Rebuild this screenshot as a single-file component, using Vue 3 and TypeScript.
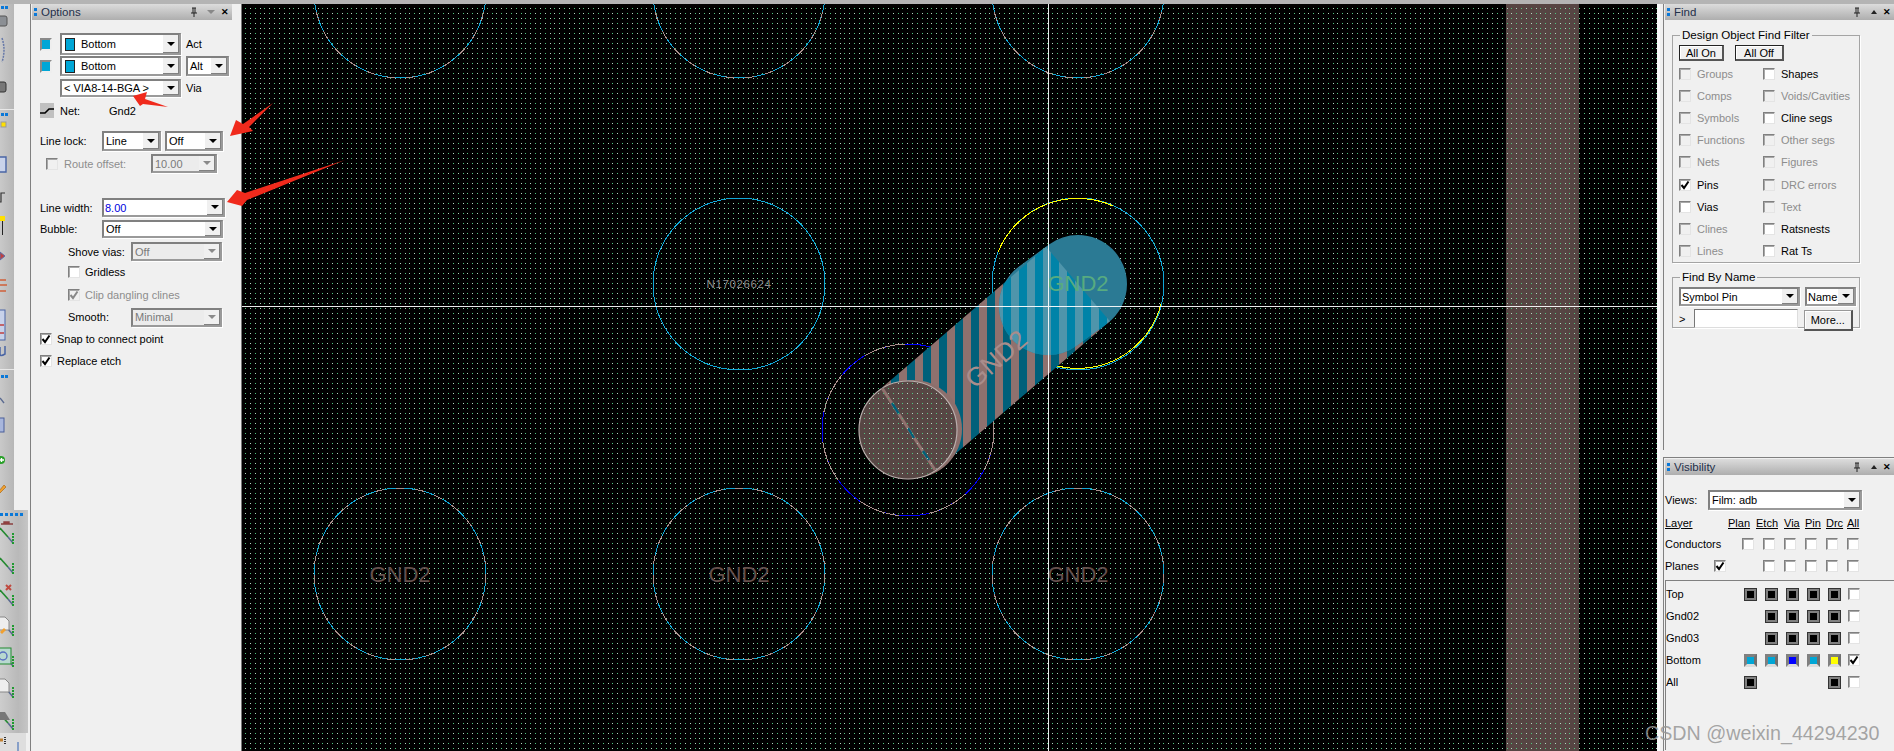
<script setup lang="ts">
type Cell = { label: string; on?: boolean; dis?: boolean }
const findRows: Cell[][] = [
  [{ label: 'Groups', dis: true }, { label: 'Shapes' }],
  [{ label: 'Comps', dis: true }, { label: 'Voids/Cavities', dis: true }],
  [{ label: 'Symbols', dis: true }, { label: 'Cline segs' }],
  [{ label: 'Functions', dis: true }, { label: 'Other segs', dis: true }],
  [{ label: 'Nets', dis: true }, { label: 'Figures', dis: true }],
  [{ label: 'Pins', on: true }, { label: 'DRC errors', dis: true }],
  [{ label: 'Vias' }, { label: 'Text', dis: true }],
  [{ label: 'Clines', dis: true }, { label: 'Ratsnests' }],
  [{ label: 'Lines', dis: true }, { label: 'Rat Ts' }],
]
const K = '#000'
const layers: { name: string; sw: (string | null)[]; on?: boolean }[] = [
  { name: 'Top', sw: [K, K, K, K, K] },
  { name: 'Gnd02', sw: [null, K, K, K, K] },
  { name: 'Gnd03', sw: [null, K, K, K, K] },
  { name: 'Bottom', sw: ['#00a6d6', '#00a6d6', '#0000ff', '#00a6d6', '#ffff00'], on: true },
  { name: 'All', sw: [K, null, null, null, K] },
]
const cols = [0, 5, 10, 15, 19, 24]
const rows = [0, 5, 10, 15, 20]
const dots = cols.flatMap((x, i) =>
  rows.map((y, j) => ({ x, y, c: (i + j) % 2 === 0 ? '#4fc77f' : '#b5d6c2' })),
)
const pads = [
  { x: 400, y: -8 }, { x: 739, y: -8 }, { x: 1078, y: -8 },
  { x: 400, y: 574 }, { x: 739, y: 574 }, { x: 1078, y: 574 },
]
const traceY = [528, 558, 590, 620, 651, 682, 714]
</script>

<template>
  <div class="root">
    <div class="topbar"></div>
    <div class="main">
      <div class="toolbar">
        <div class="tb-up">
          <svg class="tb-svg" width="14" height="506" viewBox="0 4 14 506">
            <rect x="1" y="6" width="3" height="3" fill="#0a78d8" /><rect x="5" y="6" width="3" height="3" fill="#0a78d8" />
            <rect x="-4" y="16" width="11" height="10" rx="2" fill="#8b8f94" stroke="#555" />
            <path d="M2 38 Q6 50 2 62" fill="none" stroke="#6678a8" stroke-width="1.5" stroke-dasharray="2 1" />
            <rect x="-4" y="82" width="10" height="10" rx="2" fill="#777" stroke="#333" />
            <rect y="109" width="14" height="1" fill="#e8e8e8" />
            <rect x="1" y="113" width="3" height="3" fill="#0a78d8" /><rect x="5" y="113" width="3" height="3" fill="#0a78d8" />
            <rect x="1" y="122" width="5" height="5" fill="#ffe000" stroke="#999" />
            <path d="M-1 157 H6 V172 H-1" fill="#c9d3ea" stroke="#4a65a5" stroke-width="1.4" />
            <path d="M-1 202 H1 V193 H5" fill="none" stroke="#333" stroke-width="1.2" />
            <rect x="0" y="216" width="5" height="5" fill="#ffe000" /><path d="M2.5 221 V235" stroke="#222" stroke-width="1" />
            <path d="M0 252 L5 256 L0 260 Z" fill="#c04040" stroke="#5a70a8" />
            <path d="M0 280 H6 M0 285 H7 M0 291 H6" stroke="#d0603a" stroke-width="1.5" />
            <rect x="-2" y="310" width="7" height="30" fill="#c8d2ea" stroke="#4a65a5" />
            <path d="M0 325 H4 M0 333 H4" stroke="#c04040" stroke-width="1.5" />
            <path d="M0 347 V354 Q0 357 5 354 V346" fill="none" stroke="#4a65a5" stroke-width="1.5" />
            <rect y="369" width="14" height="1" fill="#e8e8e8" />
            <rect x="1" y="375" width="3" height="3" fill="#0a78d8" /><rect x="5" y="375" width="3" height="3" fill="#0a78d8" />
            <path d="M0 398 L4 403" stroke="#5a6a90" stroke-width="1.4" />
            <rect x="-3" y="418" width="7" height="14" fill="#a8b6dc" stroke="#4a5e9a" />
            <circle cx="1" cy="460" r="4" fill="#2aa02a" /><path d="M-1 460 H4 M1.5 458 V462" stroke="#fff" stroke-width="1.4" />
            <path d="M-1 491 L4 485 L6 487 L0 493 Z" fill="#f0a030" stroke="#a06010" stroke-width=".6" />
          </svg>
        </div>
        <div class="tb-low">
          <svg class="tb-svg" width="28" height="223" viewBox="0 510 28 223">
            <rect v-for="i in 5" :key="i" :x="i * 5 - 5" y="513" width="3" height="3" fill="#0a78d8" />
            <g v-for="y in traceY" :key="y">
              <path :d="`M0 ${y} L8 ${y + 9}`" stroke="#238a30" stroke-width="1.6" />
              <path :d="`M8 ${y + 9} L13 ${y + 15}`" stroke="#5a6a90" stroke-width="1.6" />
              <path :d="`M13 ${y + 5} V${y + 17}`" stroke="#1f9a30" stroke-width="2" stroke-dasharray="2 1" />
            </g>
            <path d="M1 524 H13 M4 524 V522 H9 V524" fill="#a84040" stroke="#8a4040" stroke-width="1.4" />
            <path d="M6 585 L11 590 M11 585 L6 590" stroke="#c04a40" stroke-width="2" />
            <path d="M-1 617 H5 L9 621 V630 H-1 Z" fill="#eee" stroke="#888" />
            <path d="M0 632 L4 628 L6 630 L2 634 Z" fill="#f0a030" />
            <rect x="-1" y="648" width="12" height="16" fill="#b8d8d0" stroke="#238a30" />
            <circle cx="3" cy="656" r="4" fill="none" stroke="#5a70c0" stroke-width="1.4" />
            <path d="M-1 679 H5 L9 683 V692 H-1 Z" fill="#eee" stroke="#888" />
            <path d="M-1 712 H5 L10 720 H0 Z" fill="#777" />
          </svg>
        </div>
        <div class="tb-end">
          <svg width="28" height="18" viewBox="0 733 28 18">
            <path d="M0 740 H3" stroke="#c08030" stroke-width="3" /><path d="M5 737 V745" stroke="#333" stroke-width="2" stroke-dasharray="1 1" />
            <path d="M18 742 V751" stroke="#6a8ac0" stroke-width="1.5" />
          </svg>
        </div>
      </div>

      <div class="options">
        <div class="hdr opt-hdr">
          <i class="grip"></i><span class="title">Options</span>
          <svg class="pin" width="8" height="10" viewBox="0 0 8 10"><path d="M2 1 H6 M3 1 V6 M5 1 V6 M1 6 H7 M4 6 V10" stroke="#222" fill="none" /></svg>
          <i class="tri-d gray"></i><span class="close">✕</span>
        </div>

        <div class="row r1">
          <span class="sw sw-c"></span>
          <div class="combo w121 h22"><i class="layer"></i><span class="val">Bottom</span><i class="btn"></i></div>
          <span class="side">Act</span>
        </div>
        <div class="row r2">
          <span class="sw sw-c"></span>
          <div class="combo w121 h20"><i class="layer"></i><span class="val">Bottom</span><i class="btn"></i></div>
          <div class="combo alt"><span class="val v3">Alt</span><i class="btn"></i></div>
        </div>
        <div class="row r3">
          <span class="sw-gap"></span>
          <div class="combo w121 h18"><span class="val v3">&lt; VIA8-14-BGA &gt;</span><i class="btn"></i></div>
          <span class="side">Via</span>
        </div>
        <div class="row r4">
          <span class="net-ic"><svg width="14" height="15" viewBox="0 0 14 15"><path d="M0 10 H5 L9 6 H14" fill="none" stroke="#000" stroke-width="1.6" /></svg></span>
          <span class="net-l">Net:</span><span>Gnd2</span>
        </div>
        <div class="row r5">
          <span class="lab">Line lock:</span>
          <div class="combo lock1"><span class="val v3">Line</span><i class="btn"></i></div>
          <div class="combo lock2"><span class="val v3">Off</span><i class="btn"></i></div>
        </div>
        <div class="row r6">
          <span class="cb dis off-l"></span><span class="dim ro-l">Route offset:</span>
          <div class="combo ro dis"><span class="val v3">10.00</span><i class="btn"></i></div>
        </div>
        <div class="row r7">
          <span class="lab">Line width:</span>
          <div class="combo lw"><span class="val v1 blue">8.00</span><i class="btn"></i></div>
        </div>
        <div class="row r8">
          <span class="lab">Bubble:</span>
          <div class="combo bb"><span class="val v3">Off</span><i class="btn"></i></div>
        </div>
        <div class="row r9">
          <span class="lab2">Shove vias:</span>
          <div class="combo sm dis"><span class="val v3">Off</span><i class="btn"></i></div>
        </div>
        <div class="row r10"><span class="cb in"></span><span>Gridless</span></div>
        <div class="row r11">
          <span class="cb in dis on"><svg viewBox="0 0 10 10"><path d="M1.5 5 L4 8 L8.5 1.5" fill="none" stroke="#888" stroke-width="2" /></svg></span>
          <span class="dim">Clip dangling clines</span>
        </div>
        <div class="row r12">
          <span class="lab2">Smooth:</span>
          <div class="combo sm h18 dis"><span class="val v3">Minimal</span><i class="btn"></i></div>
        </div>
        <div class="row r13">
          <span class="cb out"><svg viewBox="0 0 10 10"><path d="M1.5 5 L4 8 L8.5 1.5" fill="none" stroke="#000" stroke-width="2" /></svg></span>
          <span>Snap to connect point</span>
        </div>
        <div class="row r14">
          <span class="cb out"><svg viewBox="0 0 10 10"><path d="M1.5 5 L4 8 L8.5 1.5" fill="none" stroke="#000" stroke-width="2" /></svg></span>
          <span>Replace etch</span>
        </div>
      </div>

      <svg class="canvas" width="1415" height="747" viewBox="242 4 1415 747">
        <defs>
          <pattern id="grid" patternUnits="userSpaceOnUse" x="245" y="8" width="29" height="25">
            <rect v-for="(d, i) in dots" :key="i" :x="d.x" :y="d.y" width="1" height="1" :fill="d.c" />
          </pattern>
          <pattern id="stripes" patternUnits="userSpaceOnUse" x="931" y="0" width="16" height="10">
            <rect x="0" y="0" width="8" height="10" fill="#8f716e" />
            <rect x="8" y="0" width="8" height="10" fill="#00607a" />
          </pattern>
          <pattern id="stripesLit" patternUnits="userSpaceOnUse" x="931" y="0" width="16" height="10">
            <rect x="0" y="0" width="8" height="10" fill="#4f95ab" />
            <rect x="8" y="0" width="8" height="10" fill="#0083a8" />
          </pattern>
          <clipPath id="viaClip"><circle cx="908" cy="430" r="48" /></clipPath>
          <clipPath id="blobClip">
            <circle cx="1048" cy="306" r="49" />
            <circle cx="1078" cy="284" r="49" />
            <polygon points="1019,266.5 1049,244.5 1107,323.5 1077,345.5" />
          </clipPath>
        </defs>
        <rect x="242" y="4" width="1415" height="747" fill="#000" />
        <rect x="1506" y="4" width="73" height="747" fill="#564543" />
        <rect x="242" y="4" width="1415" height="747" fill="url(#grid)" shape-rendering="crispEdges" />

        <g fill="none" stroke-width="1" shape-rendering="crispEdges">
          <g v-for="p in pads" :key="p.x + '-' + p.y">
            <circle :cx="p.x" :cy="p.y" r="86" stroke="#10a8d8" />
            <circle :cx="p.x" :cy="p.y" r="86" stroke="#a98f8c" stroke-dasharray="9 11" />
          </g>
          <circle cx="739" cy="284" r="86" stroke="#10a8d8" />
          <circle cx="1078" cy="284" r="86" stroke="#10a8d8" />
          <path d="M998 252 A86 86 0 0 1 1113 206" stroke="#ffff00" />
          <path d="M1161 304 A86 86 0 0 1 996 309" stroke="#ffff00" />
          <circle cx="908" cy="430" r="86" stroke="#0000ff" />
          <circle cx="908" cy="430" r="86" stroke="#a98f8c" stroke-dasharray="42 30" />
        </g>

        <text class="pcb big dark" x="400" y="582">GND2</text>
        <text class="pcb big dark" x="739" y="582">GND2</text>
        <text class="pcb big dark" x="1078" y="582">GND2</text>
        <text class="pcb small" x="739" y="288">N17026624</text>

        <path d="M908 430 L1078 284" stroke="url(#stripes)" stroke-width="98" fill="none" />
        <circle cx="913" cy="429" r="49" fill="#8c6f6c" />
        <rect x="960" y="200" width="190" height="190" fill="#2b7a94" clip-path="url(#blobClip)" />
        <path d="M908 430 L1078 284" stroke="url(#stripesLit)" stroke-width="98" fill="none" clip-path="url(#blobClip)" />
        <text class="pcb big green" x="1078" y="291">GND2</text>
        <text class="pcb mid" transform="translate(996 359) rotate(-41)" x="0" y="9">GND2</text>

        <circle cx="908" cy="430" r="49" fill="#574644" stroke="#b9aeac" stroke-width="1.2" />
        <path d="M882 388 L935 470" stroke="#8f716e" stroke-width="3" />
        <path d="M892 403 L899 414 M908 428 L914 438 M923 451 L929 460" stroke="#00607a" stroke-width="2.4" />
        <rect x="860" y="381" width="98" height="98" fill="url(#grid)" clip-path="url(#viaClip)" shape-rendering="crispEdges" />

        <path d="M242 306.5 H1657 M1048.5 4 V751" stroke="#fff" stroke-width="1" opacity=".92" shape-rendering="crispEdges" />
      </svg>

      <div class="gutter"></div>

      <div class="right">
        <div class="find">
          <div class="hdr">
            <i class="grip"></i><span class="title t-find">Find</span>
            <svg class="pin" width="8" height="10" viewBox="0 0 8 10"><path d="M2 1 H6 M3 1 V6 M5 1 V6 M1 6 H7 M4 6 V10" stroke="#222" fill="none" /></svg>
            <i class="tri-u"></i><span class="close">✕</span>
          </div>
          <fieldset class="group g1">
            <legend>Design Object Find Filter</legend>
            <div class="btns"><button class="pb on-b">All On</button><button class="pb off-b">All Off</button></div>
            <div v-for="(r, i) in findRows" :key="i" class="find-row">
              <div v-for="c in r" :key="c.label" class="find-cell">
                <span class="cb" :class="{ dis: c.dis }">
                  <svg v-if="c.on" viewBox="0 0 10 10"><path d="M1.5 5 L4 8 L8.5 1.5" fill="none" stroke="#000" stroke-width="2" /></svg>
                </span>
                <span :class="{ dim: c.dis }">{{ c.label }}</span>
              </div>
            </div>
          </fieldset>
          <fieldset class="group g2">
            <legend>Find By Name</legend>
            <div class="byname">
              <div class="combo sym"><span class="val v1">Symbol Pin</span><i class="btn"></i></div>
              <div class="combo nm"><span class="val v1">Name</span><i class="btn"></i></div>
            </div>
            <div class="byname b2">
              <span class="gt">&gt;</span><span class="input"></span><button class="pb more">More...</button>
            </div>
          </fieldset>
        </div>

        <div class="vis">
          <div class="hdr">
            <i class="grip"></i><span class="title t-vis">Visibility</span>
            <svg class="pin" width="8" height="10" viewBox="0 0 8 10"><path d="M2 1 H6 M3 1 V6 M5 1 V6 M1 6 H7 M4 6 V10" stroke="#222" fill="none" /></svg>
            <i class="tri-u"></i><span class="close">✕</span>
          </div>
          <div class="views">
            <span class="v-lab">Views:</span>
            <div class="combo vw"><span class="val v3">Film: adb</span><i class="btn"></i></div>
          </div>
          <div class="v-head">
            <u>Layer</u><u>Plan</u><u>Etch</u><u>Via</u><u>Pin</u><u>Drc</u><u>All</u>
          </div>
          <div class="v-row">
            <span>Conductors</span>
            <span class="cb"></span><span class="cb"></span><span class="cb"></span><span class="cb"></span><span class="cb"></span><span class="cb"></span>
          </div>
          <div class="v-row">
            <span class="pl-cell"><span class="pl-l">Planes</span><span class="cb"><svg viewBox="0 0 10 10"><path d="M1.5 5 L4 8 L8.5 1.5" fill="none" stroke="#000" stroke-width="2" /></svg></span></span>
            <span></span><span class="cb"></span><span class="cb"></span><span class="cb"></span><span class="cb"></span><span class="cb"></span>
          </div>
          <div class="layers">
            <div v-for="l in layers" :key="l.name" class="l-row">
              <span>{{ l.name }}</span>
              <span v-for="(s, i) in l.sw" :key="i" class="swc">
                <i v-if="s" class="sq" :class="{ col: s !== K }" :style="{ background: s }"></i>
              </span>
              <span class="cb">
                <svg v-if="l.on" viewBox="0 0 10 10"><path d="M1.5 5 L4 8 L8.5 1.5" fill="none" stroke="#000" stroke-width="2" /></svg>
              </span>
            </div>
          </div>
        </div>
      </div>
    </div>

    <svg class="arrows" width="1894" height="751" viewBox="0 0 1894 751">
      <path d="M133 96 L147 92 L145 99 L168 107 L143 104 L140 106 Z" fill="#f02a1c" />
      <path d="M230 136 L236 120 L243 124 L273 103 L249 127 L253 131 Z" fill="#f02a1c" />
      <path d="M227 202 L237 190 L245 193 L345 160 L247 200 L242 206 Z" fill="#f02a1c" />
    </svg>
    <div class="mark">CSDN @weixin_44294230</div>
  </div>
</template>

<style scoped>
.root {
  position: relative;
  width: 1894px;
  height: 751px;
  overflow: hidden;
  background: #f0f0f0;
  font: 11px/14px "Liberation Sans", Arial, sans-serif;
  color: #000;
}
.topbar { height: 4px; background: #b4b4b4; }
.main { display: flex; height: 747px; }

.toolbar { width: 30px; flex: none; display: flex; flex-direction: column; border-right: 1px solid #808080; box-sizing: content-box; }
.tb-up { width: 14px; height: 506px; background: linear-gradient(90deg, #c9c9c9, #b6b6b6); }
.tb-low { width: 28px; height: 223px; background: linear-gradient(90deg, #cdcdcd 0, #b9b9b9 65%, #c6c6c6 100%); }
.tb-end { width: 26px; height: 18px; background: #dedede; }
.tb-svg { display: block; }

.options { width: 210px; flex: none; background: #f0f0f0; border-right: 1px solid #777; }
.hdr {
  height: 16px;
  display: flex;
  align-items: center;
  background: linear-gradient(180deg, #dcdcdc, #aeaeae);
  position: relative;
}
.opt-hdr { width: 200px; margin-left: 1px; }
.grip {
  width: 3px; height: 8px; margin-left: 2px;
  background: linear-gradient(180deg, #0a78d8 0 3px, transparent 3px 5px, #0a78d8 5px 8px);
}
.title { margin-left: 4px; color: #1f2f4a; font-size: 11.5px; }
.pin { margin-left: auto; }
.tri-d { width: 0; height: 0; border: 4px solid transparent; border-top: 4px solid #222; border-bottom: 0; margin-left: 9px; }
.tri-d.gray { border-top-color: #888; }
.tri-u { width: 0; height: 0; border: 3.5px solid transparent; border-bottom: 4px solid #222; border-top: 0; margin-left: 10px; }
.close { font-size: 9px; font-weight: bold; margin-left: 6px; margin-right: 3px; width: 8px; }
.t-find, .t-vis { margin-left: 4px; }

.row { display: flex; align-items: center; padding-left: 9px; }
.r1 { margin-top: 13px; height: 22px; }
.r2 { margin-top: 1px; height: 20px; }
.r3 { margin-top: 3px; height: 18px; }
.r4 { margin-top: 6px; height: 15px; }
.r5 { margin-top: 13px; height: 20px; }
.r6 { margin-top: 3px; height: 19px; }
.r7 { margin-top: 25px; height: 19px; }
.r8 { margin-top: 3px; height: 18px; }
.r9 { margin-top: 4px; height: 19px; padding-left: 37px; }
.r10 { margin-top: 5px; height: 12px; padding-left: 37px; }
.r11 { margin-top: 11px; height: 12px; padding-left: 37px; }
.r12 { margin-top: 7px; height: 18px; padding-left: 37px; }
.r13 { margin-top: 7px; height: 12px; }
.r14 { margin-top: 10px; height: 12px; }

.sw { width: 12px; height: 13px; box-sizing: border-box; border: 2px solid #8a8a8a; border-right-color: #eee; border-bottom-color: #eee; flex: none; }
.sw-c { background: #00a6d6; }
.sw-gap { width: 12px; flex: none; }
.combo {
  box-sizing: border-box;
  display: flex;
  align-items: center;
  background: #fff;
  border: 2px solid #808080;
  border-right-color: #9a9a9a;
  border-bottom-color: #9a9a9a;
  box-shadow: 1px 1px 0 #fff;
  flex: none;
  overflow: hidden;
}
.combo.dis { background: #ececec; color: #7a7a7a; }
.w121 { width: 121px; margin-left: 8px; }
.h22 { height: 22px; }
.h20 { height: 20px; }
.h18 { height: 18px; }
.layer { width: 10px; height: 13px; background: #00a6d6; border: 1px solid #222; box-sizing: border-box; margin-left: 3px; flex: none; }
.val { flex: 1; white-space: nowrap; padding-left: 6px; }
.v3 { padding-left: 2px; }
.v1 { padding-left: 1px; }
.blue { color: #0000e0; }
.btn {
  width: 16px; height: 100%; flex: none; box-sizing: border-box;
  background: #f0f0f0;
  border-right: 1px solid #808080;
  border-bottom: 1px solid #808080;
  position: relative;
}
.btn::after {
  content: "";
  position: absolute; left: 4px; top: 50%; margin-top: -2px;
  border: 4px solid transparent; border-top: 4px solid #000; border-bottom: 0;
}
.dis .btn::after { border-top-color: #8a8a8a; }
.side { margin-left: 5px; }
.alt { width: 43px; height: 20px; margin-left: 5px; }
.net-ic { width: 14px; height: 15px; background: #c0c0c0; flex: none; display: block; }
.net-ic svg { display: block; }
.net-l { margin-left: 6px; width: 49px; }
.lab { width: 62px; flex: none; }
.lab2 { width: 63px; flex: none; }
.lock1 { width: 59px; height: 20px; }
.lock2 { width: 58px; height: 20px; margin-left: 4px; }
.off-l { margin-left: 6px; }
.dim { color: #8d8d8d; }
.ro-l { width: 87px; flex: none; }
.ro { width: 66px; height: 19px; }
.lw { width: 123px; height: 19px; }
.bb { width: 121px; height: 18px; }
.sm { width: 91px; height: 19px; }

.cb {
  width: 12px; height: 12px; box-sizing: border-box; flex: none; display: block;
  background: #fff;
  border: 1px solid #808080;
  border-right-color: #e4e4e4;
  border-bottom-color: #e4e4e4;
  box-shadow: inset 1px 1px 0 #a8a8a8;
  margin-right: 6px;
}
.cb svg { display: block; width: 10px; height: 10px; }
.cb.dis { background: #f0f0f0; }
.in, .out { margin-right: 5px; }

.canvas { flex: none; display: block; }
.pcb { text-anchor: middle; font-family: "Liberation Sans", Arial, sans-serif; }
.big { font-size: 22px; }
.dark { fill: #644f4c; }
.green { fill: #57ab80; }
.mid { font-size: 26px; fill: #a98d8b; }
.small { font-size: 11.5px; fill: #8c8c8c; letter-spacing: .6px; }

.gutter { width: 6px; flex: none; background: linear-gradient(90deg, #fafafa 0 3px, #f0f0f0 3px); }
.right { width: 231px; flex: none; display: flex; flex-direction: column; }
.find { height: 446px; border-left: 1px solid #808080; padding-left: 1px; box-sizing: border-box; }
.vis { margin-top: 7px; height: 294px; border-left: 1px solid #808080; border-top: 1px solid #808080; padding-left: 1px; padding-top: 1px; box-sizing: border-box; }

.group {
  box-sizing: border-box;
  width: 188px;
  min-width: 0;
  margin: 0 0 0 7px;
  padding: 0 6px;
  border: 1px solid #a4a4a4;
  box-shadow: 1px 1px 0 #fff;
}
.group legend { padding: 0 2px; margin-left: 1px; line-height: 14px; font-size: 11.6px; }
.g1 { margin-top: 8px; height: 235px; }
.g2 { margin-top: 7px; height: 58px; }
.btns { display: flex; margin-top: 3px; height: 18px; }
.pb {
  box-sizing: border-box;
  font: inherit;
  padding: 0;
  background: #f0f0f0;
  border: 1px solid #222;
  border-right: 2px solid #555;
  border-bottom: 2px solid #555;
  box-shadow: inset 1px 1px 0 #fff;
}
.on-b { width: 45px; height: 16px; }
.off-b { width: 49px; height: 16px; margin-left: 11px; }
.find-row { display: flex; height: 22.12px; align-items: center; }
.find-cell { width: 84px; display: flex; align-items: center; flex: none; white-space: nowrap; }

.byname { display: flex; margin-top: 3px; }
.sym { width: 121px; height: 19px; }
.nm { width: 51px; height: 19px; margin-left: 5px; }
.b2 { margin-top: 3px; align-items: flex-start; }
.gt { width: 15px; flex: none; margin-top: 3px; }
.input { width: 105px; height: 19px; box-sizing: border-box; background: #fff; border-top: 1px solid #777; border-left: 1px solid #777; border-right: 1px solid #ddd; border-bottom: 1px solid #ddd; }
.more { width: 50px; height: 21px; margin-left: 6px; margin-top: 1px; border: 1px solid #999; border-right: 2px solid #555; border-bottom: 2px solid #555; }

.views { display: flex; align-items: center; margin-top: 15px; height: 20px; }
.v-lab { width: 43px; flex: none; }
.vw { width: 154px; height: 20px; }
.v-head { display: grid; grid-template-columns: 63px 28px 28px 21px 21px 21px 21px; height: 21px; margin-top: 2px; align-items: center; }
.v-row { display: grid; grid-template-columns: 77px 21px 21px 21px 21px 21px 21px; height: 22px; align-items: center; }
.pl-cell { display: flex; align-items: center; }
.pl-l { width: 49px; flex: none; }
.layers { margin-top: 3px; border-top: 1px solid #808080; border-left: 1px solid #808080; padding-top: 2px; height: 170px; box-sizing: border-box; }
.l-row { display: grid; grid-template-columns: 78px 21px 21px 21px 21px 20px 21px; height: 22px; align-items: center; }
.swc { display: block; height: 13px; }
.sq {
  display: block; width: 13px; height: 13px; box-sizing: border-box;
  border: 3px solid #808080;
  outline: 1px solid #333;
  outline-offset: -1px;
}
.sq.col { outline: none; border-right-color: #6f6f6f; border-bottom-color: #ddd; }

.arrows { position: absolute; left: 0; top: 0; pointer-events: none; }
.mark {
  position: absolute; left: 1645px; top: 722px;
  font-size: 19.7px; line-height: 22px; color: rgba(150, 150, 150, .85);
  white-space: nowrap;
}
</style>
